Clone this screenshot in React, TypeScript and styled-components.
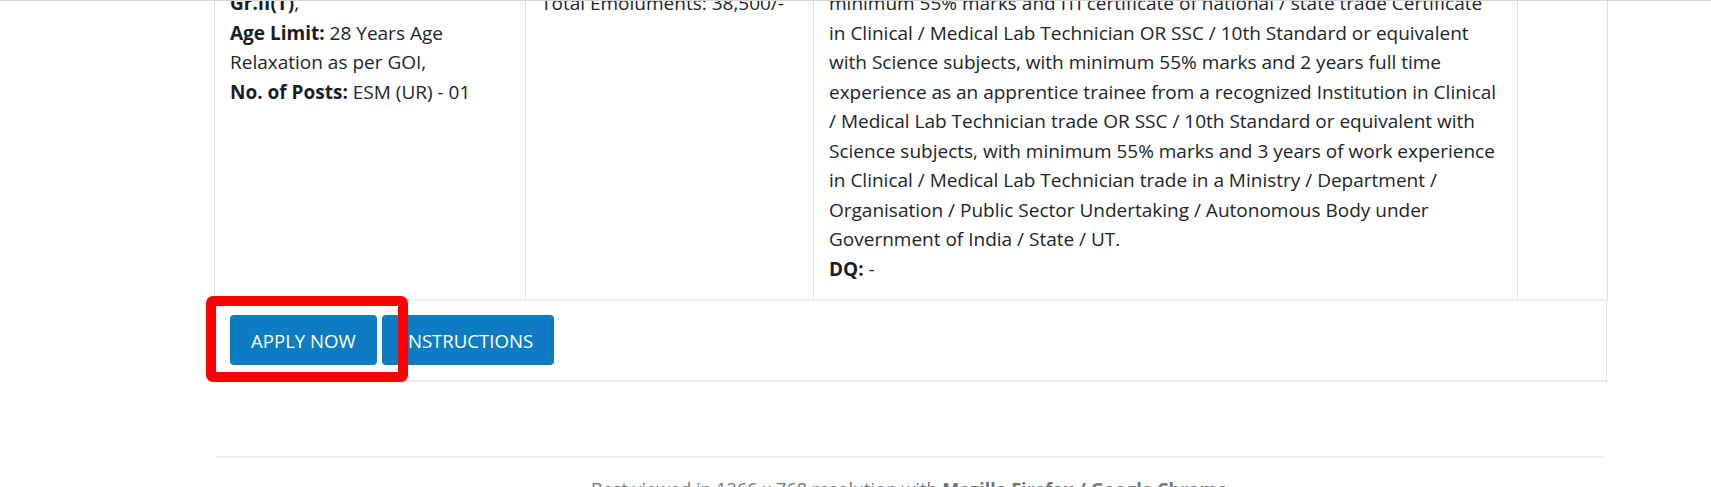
import styled, { createGlobalStyle } from 'styled-components'

const GlobalStyle = createGlobalStyle`
  html, body {
    margin: 0;
    padding: 0;
    background: #fff;
    overflow: hidden;
  }
  body {
    font-family: 'Open Sans', 'Noto Sans', sans-serif;
    font-size: 19px;
    line-height: 29.5px;
    color: #212529;
  }
`

// the qualification text, broken where the page breaks it
const qualification = [
  'minimum 55% marks and ITI certificate of national / state trade Certificate',
  'in Clinical / Medical Lab Technician OR SSC / 10th Standard or equivalent',
  'with Science subjects, with minimum 55% marks and 2 years full time',
  'experience as an apprentice trainee from a recognized Institution in Clinical',
  '/ Medical Lab Technician trade OR SSC / 10th Standard or equivalent with',
  'Science subjects, with minimum 55% marks and 3 years of work experience',
  'in Clinical / Medical Lab Technician trade in a Ministry / Department /',
  'Organisation / Public Sector Undertaking / Autonomous Body under',
  'Government of India / State / UT.',
]

export default function App() {
  return (
    <>
      <GlobalStyle />
      <HeaderEdge />
      <Page>
        <JobTable>
          <colgroup>
            <col style={{ width: 311 }} />
            <col style={{ width: 288 }} />
            <col style={{ width: 704 }} />
            <col style={{ width: 90 }} />
          </colgroup>
          <tbody>
            <tr>
              <Cell>
                <Line>
                  <b>Gr.II(T)</b>,
                </Line>
                <Line>
                  <b>Age Limit:</b> 28 Years Age
                </Line>
                <Line>Relaxation as per GOI,</Line>
                <Line>
                  <b>No. of Posts:</b> ESM (UR) - 01
                </Line>
              </Cell>
              <Cell>Total Emoluments: 38,500/-</Cell>
              <Cell>
                {qualification.map(text => (
                  <Line key={text}>{text}</Line>
                ))}
                <Line>
                  <b>DQ:</b> -
                </Line>
              </Cell>
              <Cell />
            </tr>
          </tbody>
        </JobTable>

        <ActionRow>
          <Highlighted>
            <ActionButton>Apply Now</ActionButton>
            <RedBox />
          </Highlighted>
          <ActionButton>Instructions</ActionButton>
        </ActionRow>

        <Footer>
          <FooterNote>
            Best viewed in 1366 x 768 resolution with{' '}
            <b>Mozilla Firefox / Google Chrome</b>
          </FooterNote>
        </Footer>
      </Page>
    </>
  )
}

const HeaderEdge = styled.div`
  position: fixed;
  top: 0;
  left: 0;
  right: 0;
  height: 1px;
  background: #d6d6d6;
  z-index: 5;
`

const Page = styled.div`
  width: 1393px;
  margin-left: 214px;
`

const JobTable = styled.table`
  width: 1393px;
  table-layout: fixed;
  border-collapse: collapse;
  margin-top: -26px;
`

const Cell = styled.td`
  vertical-align: top;
  padding: 15px 15px;
  border-left: 1px solid #dee2e6;
  border-right: 1px solid #dee2e6;
  border-bottom: 2px solid #eeeeee;

  b {
    font-weight: 700;
    color: #1b1e21;
  }
`

const Line = styled.span`
  display: block;
  white-space: nowrap;
`

const ActionRow = styled.div`
  display: flex;
  gap: 5px;
  padding: 14px 15px 15px;
  border-left: 1px solid #dee2e6;
  border-right: 1px solid #dee2e6;
  border-bottom: 2px solid #eeeeee;
`

const Highlighted = styled.div`
  position: relative;
  display: flex;
`

const ActionButton = styled.button`
  height: 50px;
  padding: 0 21px;
  border: none;
  border-radius: 4px;
  background: #0e7cc3;
  color: #fff;
  font-family: 'Open Sans', 'Noto Sans', sans-serif;
  font-size: 18.6px;
  text-transform: uppercase;
  cursor: pointer;
`

const RedBox = styled.span`
  position: absolute;
  left: -24px;
  top: -19px;
  width: 202px;
  height: 86px;
  box-sizing: border-box;
  border: 10px solid #ff0000;
  border-radius: 7px;
  pointer-events: none;
`

const Footer = styled.footer`
  margin: 74px 4px 0 2px;
  border-top: 2px solid #eeeeee;
  padding-top: 17px;
`

const FooterNote = styled.p`
  margin: 0;
  text-align: center;
  font-size: 18px;
  color: #6c757d;
`
